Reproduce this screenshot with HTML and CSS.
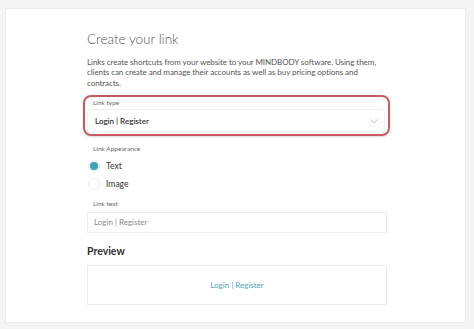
FILE: index.html
```html
<!DOCTYPE html>
<html>
<head>
<meta charset="utf-8">
<link rel="stylesheet" href="styles.css">
</head>
<body>
<div class="card">
  <div class="content">
    <h1 class="title">Create your link</h1>
    <p class="intro">Links create shortcuts from your website to your MINDBODY software. Using them, clients can create and manage their accounts as well as buy pricing options and contracts.</p>
    <div class="highlight">
      <div class="label">Link type</div>
      <div class="select">
        <span>Login | Register</span>
        <svg class="chev" width="8" height="5" viewBox="0 0 8 5"><path d="M0.5 0.5 L4 4 L7.5 0.5" fill="none" stroke="#b5b5b5" stroke-width="0.9"/></svg>
      </div>
    </div>
    <div class="label appear">Link Appearance</div>
    <div class="radio first"><span class="dot on"></span><span>Text</span></div>
    <div class="radio"><span class="dot"></span><span>Image</span></div>
    <div class="label ltext">Link text</div>
    <div class="input">Login | Register</div>
    <h2 class="preview-title">Preview</h2>
    <div class="preview"><span class="plink">Login | Register</span></div>
  </div>
</div>
</body>
</html>
```
FILE: styles.css
```css
html, body { margin: 0; padding: 0; }
body {
  background: #f4f4f4;
  font-family: Lato, "Open Sans", sans-serif;
  color: #555;
  width: 474px;
  height: 329px;
  overflow: hidden;
}
.card {
  margin: 8px 0 0 5px;
  width: 461px;
  height: 315px;
  background: #fff;
  border: 1px solid #ebebeb;
  box-sizing: border-box;
}
.content {
  padding: 22px 0 0 81px;
  width: 300px;
}
.title {
  margin: 0;
  font-size: 13.5px;
  font-weight: 300;
  color: #555;
  line-height: 16px;
}
.intro {
  margin: 10px 0 0 0;
  font-size: 8px;
  line-height: 10.3px;
  letter-spacing: -0.06px;
  color: #555;
  width: 300px;
}
.highlight {
  margin: 7px 0 0 -4px;
  width: 307px;
  height: 41px;
  box-sizing: border-box;
  border: 2px solid #c85a60;
  border-radius: 8px;
  padding: 2px 3px 0 2px;
  box-shadow: 0 1px 2px rgba(0,0,0,0.15);
}
.label {
  font-size: 6.5px;
  color: #666;
  line-height: 8px;
  padding-left: 6px;
}
.select {
  margin-top: 2px;
  height: 22px;
  border: 1px solid #f0f0f0;
  border-radius: 3px;
  display: flex;
  align-items: center;
  justify-content: space-between;
  padding: 0 6px 0 7px;
  font-size: 8px;
  color: #333;
  font-weight: 600;
}
.chev { margin-top: 1px; }
.appear { margin-top: 9px; }
.radio {
  display: flex;
  align-items: center;
  gap: 6px;
  height: 18px;
  font-size: 8.5px;
  color: #444;
  font-weight: 500;
  padding-left: 1px;
}
.radio.first { margin-top: 4px; }
.dot {
  width: 12px;
  height: 12px;
  border-radius: 50%;
  border: 1px solid #ececec;
  box-sizing: border-box;
  background: #fff;
}
.dot.on {
  background: #3aa5b8;
  border: 2.5px solid #e6f1f3;
}
.ltext { margin-top: 7px; }
.input {
  margin-top: 4px;
  height: 21px;
  border: 1px solid #eeeeee;
  box-sizing: border-box;
  font-size: 8px;
  color: #888;
  display: flex;
  align-items: center;
  padding-left: 6px;
}
.preview-title {
  margin: 12px 0 0 0;
  font-size: 10.5px;
  font-weight: 700;
  color: #333;
  line-height: 12px;
}
.preview {
  margin-top: 8px;
  height: 40px;
  border: 1px solid #ebebeb;
  box-sizing: border-box;
  display: flex;
  align-items: center;
  justify-content: center;
}
.plink {
  font-size: 8px;
  color: #4fa7b7;
}
```
